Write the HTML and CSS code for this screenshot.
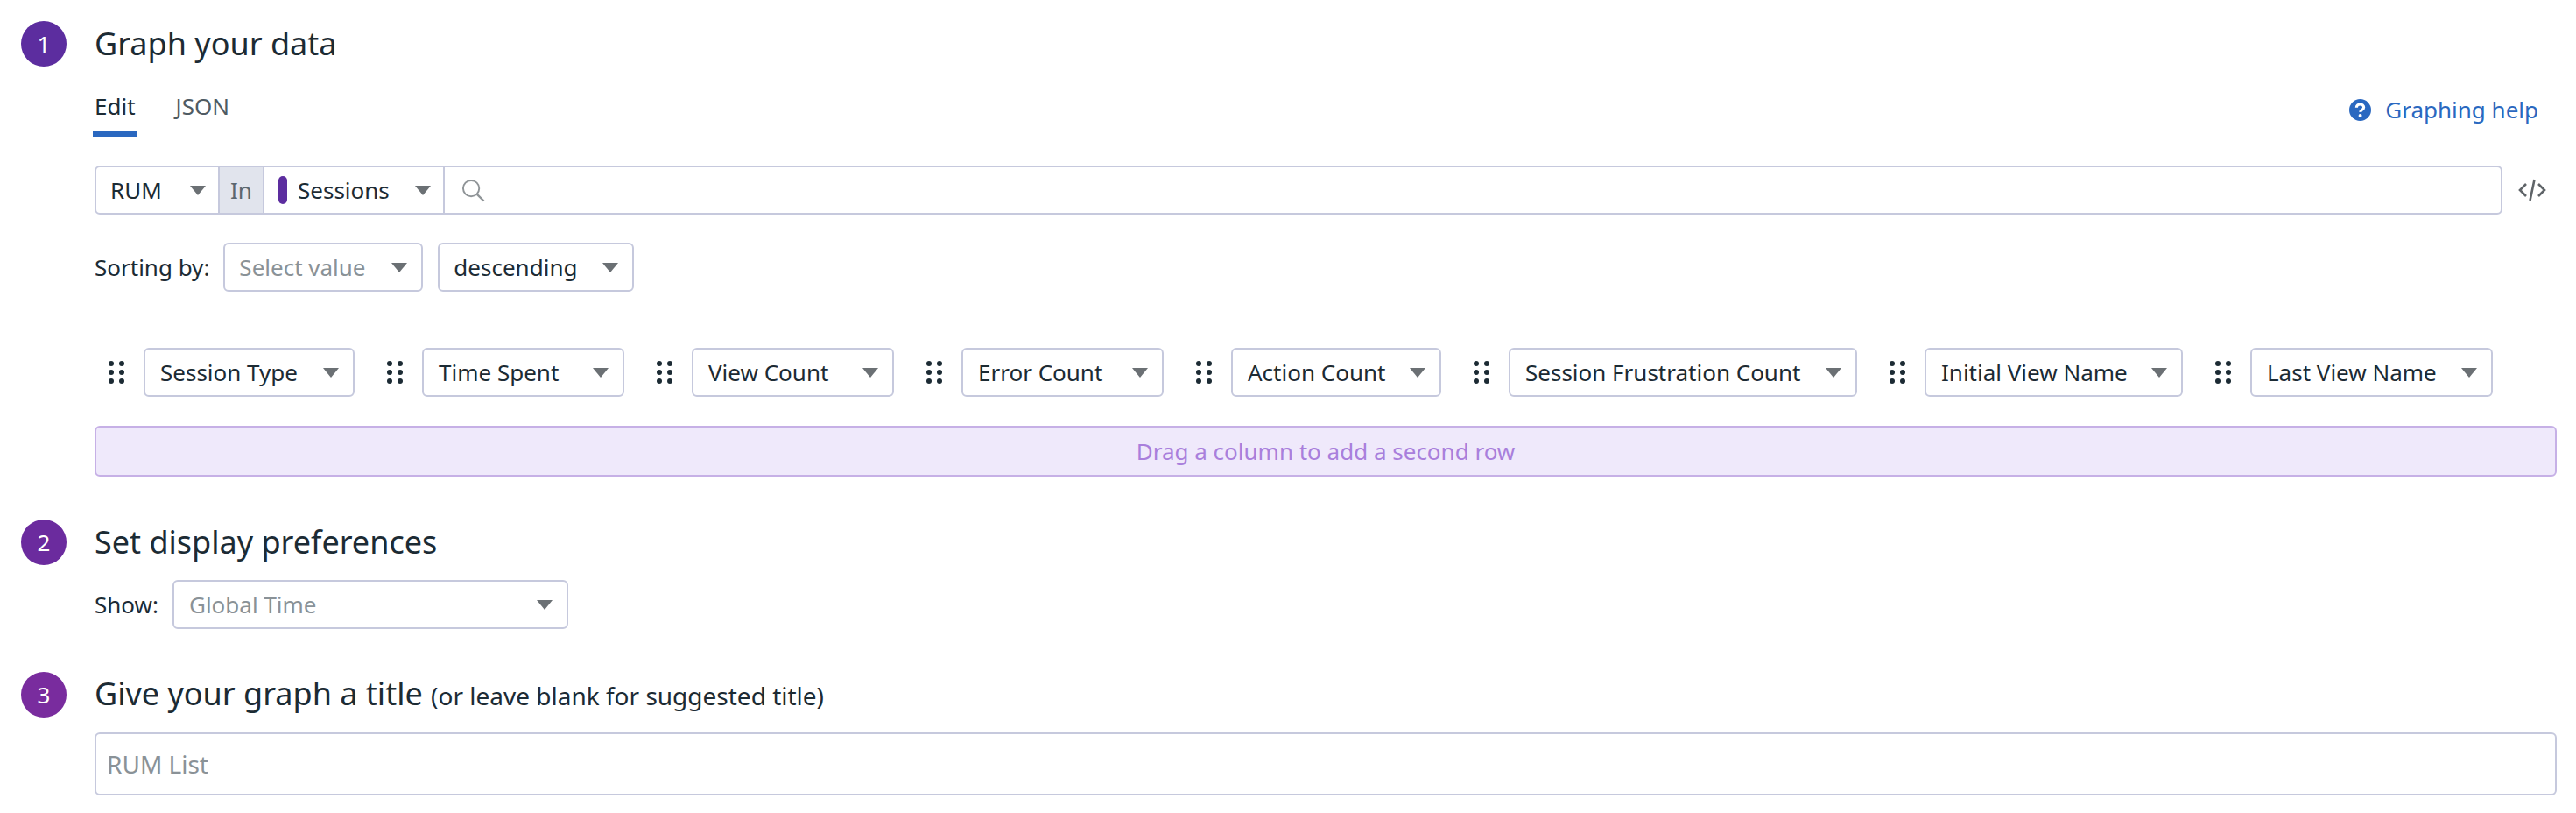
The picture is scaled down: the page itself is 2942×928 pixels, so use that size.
FILE: index.html
```html
<!DOCTYPE html>
<html lang="en">
<head>
<meta charset="UTF-8">
<meta name="viewport" content="width=device-width, initial-scale=1.0">
<title>Graph editor</title>
<link rel="stylesheet" href="styles.css">
</head>
<body>
<section class="step step-one">
    <div class="step-head">
        <span class="step-num num-one">1</span>
        <h2>Graph your data</h2>
    </div>
    <div class="tabs-row">
        <div class="tabs">
            <span class="tab tab-active">Edit</span>
            <span class="tab">JSON</span>
        </div>
        <a class="help-link">
            <svg class="help-icon" viewBox="0 0 24 24"><circle cx="12" cy="12" r="12" fill="#2a68c0"/><path d="M8 9.4c0-2.3 1.8-3.6 4-3.6s4 1.3 4 3.3c0 2.6-3.6 2.6-3.8 5.2" fill="none" stroke="#fff" stroke-width="3"/><circle cx="12.1" cy="18.2" r="1.9" fill="#fff"/></svg>
            Graphing help
        </a>
    </div>
    <div class="query-row">
        <div class="query-bar">
            <div class="seg seg-source">RUM<i class="caret"></i></div>
            <div class="seg-in">In</div>
            <div class="seg seg-sessions"><i class="pill"></i>Sessions<i class="caret"></i></div>
            <div class="seg-search">
                <svg class="search-icon" viewBox="0 0 28 28"><circle cx="11.5" cy="11.5" r="9.5" fill="none" stroke="#8f9497" stroke-width="2"/><path d="M18.5 18.5l8 8" stroke="#8f9497" stroke-width="2.4"/></svg>
            </div>
        </div>
        <svg class="code-icon" viewBox="0 0 32 26"><path d="M9 6l-7 7 7 7M23 6l7 7-7 7M18.5 1l-5 24" fill="none" stroke="#5f6468" stroke-width="2.6"/></svg>
    </div>
    <div class="sort-row">
        <span class="label">Sorting by:</span>
        <div class="select sel-sort muted">Select value<i class="caret"></i></div>
        <div class="select sel-order">descending<i class="caret"></i></div>
    </div>
    <div class="columns-row">
        <div class="col"><i class="handle"><b></b><b></b><b></b><b></b><b></b><b></b></i><div class="select w-type">Session Type<i class="caret"></i></div></div>
        <div class="col"><i class="handle"><b></b><b></b><b></b><b></b><b></b><b></b></i><div class="select w-time">Time Spent<i class="caret"></i></div></div>
        <div class="col"><i class="handle"><b></b><b></b><b></b><b></b><b></b><b></b></i><div class="select w-count">View Count<i class="caret"></i></div></div>
        <div class="col"><i class="handle"><b></b><b></b><b></b><b></b><b></b><b></b></i><div class="select w-count">Error Count<i class="caret"></i></div></div>
        <div class="col"><i class="handle"><b></b><b></b><b></b><b></b><b></b><b></b></i><div class="select w-action">Action Count<i class="caret"></i></div></div>
        <div class="col"><i class="handle"><b></b><b></b><b></b><b></b><b></b><b></b></i><div class="select w-frust">Session Frustration Count<i class="caret"></i></div></div>
        <div class="col"><i class="handle"><b></b><b></b><b></b><b></b><b></b><b></b></i><div class="select w-initial">Initial View Name<i class="caret"></i></div></div>
        <div class="col"><i class="handle"><b></b><b></b><b></b><b></b><b></b><b></b></i><div class="select w-last">Last View Name<i class="caret"></i></div></div>
    </div>
    <div class="drop-zone">Drag a column to add a second row</div>
</section>

<section class="step step-two">
    <div class="step-head">
        <span class="step-num num-two">2</span>
        <h2>Set display preferences</h2>
    </div>
    <div class="show-row">
        <span class="label">Show:</span>
        <div class="select sel-show muted">Global Time<i class="caret"></i></div>
    </div>
</section>

<section class="step step-three">
    <div class="step-head">
        <span class="step-num num-three">3</span>
        <h2>Give your graph a title <small>(or leave blank for suggested title)</small></h2>
    </div>
    <input class="title-input" type="text" placeholder="RUM List">
</section>
</body>
</html>
```

FILE: styles.css
```css
* {
    box-sizing: border-box;
}
body {
    margin: 0;
    padding: 24px 22px 0 24px;
    font-family: "Noto Sans", "Open Sans", sans-serif;
    font-size: 26px;
    color: #1c2b34;
    background: #fff;
}
.step-head {
    display: flex;
    align-items: center;
    height: 52px;
}
.step-head h2 {
    margin: 0;
    font-size: 36px;
    font-weight: 400;
    line-height: 52px;
}
.step-head small {
    font-size: 28px;
}
.step-num {
    width: 52px;
    height: 52px;
    margin-right: 32px;
    border-radius: 50%;
    color: #fff;
    font-size: 26px;
    line-height: 52px;
    text-align: center;
}
.num-one {
    background-color: #5c2d9f;
}
.num-two {
    background-color: #6b2b9e;
}
.num-three {
    background-color: #792c9e;
}
.tabs-row,
.query-row,
.sort-row,
.drop-zone,
.show-row,
.title-input {
    margin-left: 84px;
}
.tabs-row {
    display: flex;
    justify-content: space-between;
    height: 56px;
    margin-top: 24px;
}
.tabs {
    display: flex;
    gap: 46px;
}
.tab {
    height: 56px;
    color: #4f5b63;
    line-height: 42px;
}
.tab-active {
    position: relative;
    color: #1c2b34;
}
.tab-active::after {
    content: "";
    position: absolute;
    left: -2px;
    right: -2px;
    bottom: 0;
    height: 7px;
    background-color: #2a68c0;
}
.help-link {
    display: flex;
    align-items: center;
    gap: 16px;
    height: 40px;
    margin-top: 5px;
    margin-right: 21px;
    color: #2a68c0;
}
.help-icon {
    width: 25px;
    height: 25px;
}
.query-row {
    display: flex;
    align-items: center;
    margin-top: 33px;
}
.query-bar {
    display: flex;
    flex: 1;
    height: 56px;
    border: 2px solid #c6c9dd;
    border-radius: 6px;
}
.seg {
    display: flex;
    align-items: center;
    padding: 0 14px 0 16px;
}
.seg-source {
    width: 141px;
    border-right: 2px solid #c6c9dd;
}
.seg-in {
    width: 51px;
    border-right: 2px solid #c6c9dd;
    background-color: #e1e4ed;
    color: #5b6770;
    line-height: 52px;
    text-align: center;
}
.seg-sessions {
    width: 206px;
    border-right: 2px solid #c6c9dd;
}
.seg-search {
    display: flex;
    flex: 1;
    align-items: center;
    padding-left: 19px;
}
.search-icon {
    width: 27px;
    height: 27px;
}
.pill {
    width: 10px;
    height: 32px;
    margin-right: 12px;
    border-radius: 5px;
    background-color: #5c2d9f;
}
.caret {
    width: 0;
    height: 0;
    margin-left: auto;
    border-left: 9.5px solid transparent;
    border-right: 9.5px solid transparent;
    border-top: 11px solid #6b7074;
}
.code-icon {
    width: 32px;
    height: 26px;
    margin-left: 18px;
    margin-right: 12px;
}
.sort-row,
.show-row {
    display: flex;
    align-items: center;
    gap: 16px;
}
.sort-row {
    margin-top: 32px;
}
.select {
    display: flex;
    align-items: center;
    height: 56px;
    padding: 0 16px 0 17px;
    border: 2px solid #c6c9dd;
    border-radius: 6px;
}
.muted {
    color: #8a9297;
}
.sel-sort {
    width: 228px;
    padding-left: 16px;
}
.sel-order {
    width: 224px;
    margin-left: 1px;
    padding-left: 16px;
}
.columns-row {
    display: flex;
    gap: 37px;
    margin-top: 64px;
    margin-left: 100px;
}
.col {
    display: flex;
    align-items: center;
    gap: 22px;
}
.handle {
    display: grid;
    grid-template-columns: 6px 6px;
    gap: 4px 6px;
    width: 18px;
}
.handle b {
    width: 6px;
    height: 6px;
    border-radius: 50%;
    background-color: #1c2b34;
}
.w-type {
    width: 241px;
}
.w-time {
    width: 231px;
}
.w-count {
    width: 231px;
}
.w-action {
    width: 240px;
}
.w-frust {
    width: 398px;
}
.w-initial {
    width: 295px;
}
.w-last {
    width: 277px;
}
.drop-zone {
    height: 58px;
    margin-top: 33px;
    border: 2px solid #c6b0e6;
    border-radius: 6px;
    background-color: #efe9fb;
    color: #a97fdc;
    line-height: 54px;
    text-align: center;
}
.step-two {
    margin-top: 49px;
}
.show-row {
    margin-top: 17px;
}
.sel-show {
    width: 452px;
}
.step-three {
    margin-top: 49px;
}
.title-input {
    display: block;
    width: calc(100% - 84px);
    height: 72px;
    margin-top: 17px;
    padding: 0 12px;
    border: 2px solid #c6c9dd;
    border-radius: 6px;
    outline: none;
    font-family: inherit;
    font-size: 28px;
    color: #1c2b34;
}
.title-input::placeholder {
    color: #8a9297;
}
```
